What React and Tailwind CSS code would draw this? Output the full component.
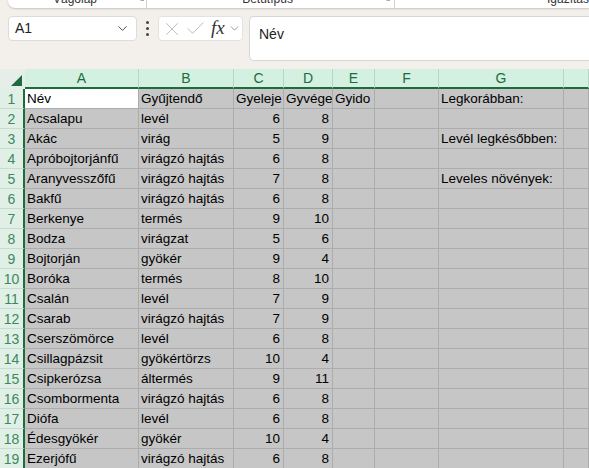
import React from "react";
import { ChevronDown, X, Check } from "lucide-react";

const rows = [
  ["Név", "Gyűjtendő", "Gyeleje", "Gyvége", "Gyido", "", "Legkorábban:"],
  ["Acsalapu", "levél", 6, 8, "", "", ""],
  ["Akác", "virág", 5, 9, "", "", "Levél legkésőbben:"],
  ["Apróbojtorjánfű", "virágzó hajtás", 6, 8, "", "", ""],
  ["Aranyvesszőfű", "virágzó hajtás", 7, 8, "", "", "Leveles növények:"],
  ["Bakfű", "virágzó hajtás", 6, 8, "", "", ""],
  ["Berkenye", "termés", 9, 10, "", "", ""],
  ["Bodza", "virágzat", 5, 6, "", "", ""],
  ["Bojtorján", "gyökér", 9, 4, "", "", ""],
  ["Boróka", "termés", 8, 10, "", "", ""],
  ["Csalán", "levél", 7, 9, "", "", ""],
  ["Csarab", "virágzó hajtás", 7, 9, "", "", ""],
  ["Cserszömörce", "levél", 6, 8, "", "", ""],
  ["Csillagpázsit", "gyökértörzs", 10, 4, "", "", ""],
  ["Csipkerózsa", "áltermés", 9, 11, "", "", ""],
  ["Csombormenta", "virágzó hajtás", 6, 8, "", "", ""],
  ["Diófa", "levél", 6, 8, "", "", ""],
  ["Édesgyökér", "gyökér", 10, 4, "", "", ""],
  ["Ezerjófű", "virágzó hajtás", 6, 8, "", "", ""],
];

const cols = ["A", "B", "C", "D", "E", "F", "G", ""];

function Launcher() {
  return (
    <svg width="8" height="8" viewBox="0 0 8 8" className="text-[#555]">
      <path d="M1 1 L6 6 M6 2.5 V6 H2.5" stroke="currentColor" strokeWidth="1" fill="none" />
    </svg>
  );
}

export default function App() {
  return (
    <div
      className="w-[589px] h-[468px] overflow-hidden bg-[#f3efeb] text-black"
      style={{ fontFamily: '"Liberation Sans", Arial, sans-serif' }}
    >
      {/* Ribbon remnant */}
      <div className="ml-[8px] h-[8px] bg-white rounded-bl-[7px] shadow-[0_1px_2px_rgba(0,0,0,0.18)] overflow-hidden flex items-start text-[12px] text-[#333] leading-[14px]">
        <div className="w-[149px] flex items-start">
          <span className="ml-[45px] -mt-[8px]">Vágólap</span>
          <span className="ml-auto -mt-[6px]">
            <Launcher />
          </span>
        </div>
        <div className="w-px h-[8px] bg-[#d4d4d4]" />
        <div className="w-[266px] flex items-start">
          <span className="ml-[95px] -mt-[8px]">Betűtípus</span>
          <span className="ml-auto mr-[2px] -mt-[6px]">
            <Launcher />
          </span>
        </div>
        <div className="w-px h-[8px] bg-[#d4d4d4]" />
        <div className="flex items-start">
          <span className="ml-[152px] -mt-[8px]">Igazítás</span>
        </div>
      </div>

      {/* Formula bar */}
      <div className="mt-[8px] flex items-start h-[45px]">
        <div className="ml-[8px] w-[129px] h-[25px] bg-white border border-[#dcdcdc] rounded-[4px] flex items-center pl-[6px] pr-[6px]">
          <span className="text-[14px] text-[#222]">A1</span>
          <ChevronDown className="ml-auto text-[#444]" size={15} strokeWidth={1.5} />
        </div>
        <div className="w-[21px] h-[25px] flex flex-col items-center justify-center gap-[3px]">
          <div className="w-[3px] h-[3px] rounded-full bg-[#444]" />
          <div className="w-[3px] h-[3px] rounded-full bg-[#444]" />
          <div className="w-[3px] h-[3px] rounded-full bg-[#444]" />
        </div>
        <div className="w-[85px] h-[25px] bg-white border border-[#e2e2e2] rounded-[4px] flex items-center pl-[2px]">
          <X size={22} strokeWidth={0.9} className="text-[#b0b0b0]" />
          <Check size={23} strokeWidth={0.9} className="ml-[1px] text-[#b0b0b0]" />
          <span
            className="ml-[4px] text-[19px] italic text-[#333] leading-none -mt-[2px]"
            style={{ fontFamily: '"Liberation Serif", "Times New Roman", serif' }}
          >
            fx
          </span>
          <ChevronDown size={13} strokeWidth={1.4} className="ml-[3px] text-[#777]" />
        </div>
        <div className="ml-[6px] flex-1 h-[45px] bg-white border border-[#d6d6d6] border-r-0 rounded-l-[5px] pl-[9px] pt-[5px]">
          <span className="text-[14px] text-[#222]">Név</span>
        </div>
      </div>

      {/* Grid */}
      <div className="mt-[8px] grid grid-cols-[25px_114px_95px_50px_49px_42px_64px_125px_1fr]">
        <div className="h-[20px] bg-[#e5eee8] relative">
          <div className="absolute right-[3px] bottom-[3px] w-0 h-0 border-l-[11px] border-l-transparent border-b-[11px] border-b-[#1f6b40]" />
        </div>
        {cols.map((c, i) => (
          <div
            key={i}
            className="h-[20px] bg-[#d3f0e0] border-r border-r-[#b7d6c3] border-b-2 border-b-[#1e6b3e] flex items-center justify-center text-[14px] text-[#1f6b40] leading-none"
          >
            {c}
          </div>
        ))}
        {rows.map((r, ri) => (
          <React.Fragment key={ri}>
            <div className="h-[20px] bg-[#e0f0e6] border-r-2 border-r-[#1e6b3e] border-b border-b-[#c6ddcf] flex items-center justify-center text-[14px] text-[#3f875c] leading-none">
              {ri + 1}
            </div>
            {[0, 1, 2, 3, 4, 5, 6, 7].map((ci) => {
              const v = ci < 7 ? r[ci] : "";
              const num = typeof v === "number";
              const white = ri === 0 && ci === 0;
              return (
                <div
                  key={ci}
                  className={
                    "h-[20px] border-r border-b border-[#acacac] whitespace-nowrap overflow-hidden text-[13.5px] leading-[19px] " +
                    (white ? "bg-white " : "bg-[#c6c6c6] ") +
                    (num ? "text-right pr-[3px]" : "text-left pl-[2px]")
                  }
                >
                  {v}
                </div>
              );
            })}
          </React.Fragment>
        ))}
      </div>
    </div>
  );
}
